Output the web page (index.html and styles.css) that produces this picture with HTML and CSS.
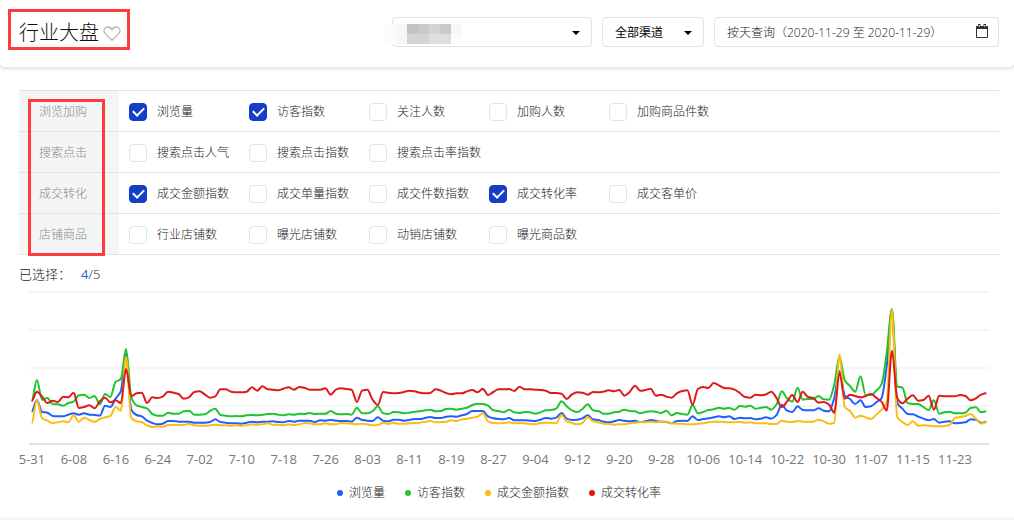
FILE: index.html
```html
<!DOCTYPE html>
<html lang="zh-CN">
<head>
  <meta charset="UTF-8" />
  <meta name="viewport" content="width=device-width, initial-scale=1.0"/>
  <title>行业大盘</title>
  <link rel="stylesheet" href="styles.css">
</head>
<body>
  <header class="topbar">
    <div class="title marked">
      <h1>行业大盘</h1>
      <button class="fav" aria-label="收藏">
        <svg width="18" height="16" viewBox="0 0 18 16"><path d="M9 14.4 2.2 7.6A3.9 3.9 0 0 1 1 4.900C1 2.700 2.700 1 4.900 1 6.800 1 8.300 2.300 9 3.900 9.700 2.300 11.200 1 13.100 1 15.300 1 17 2.700 17 4.900c0 1-.4 2-1.200 2.700z" fill="none" stroke="#b5b5b5" stroke-width="1.300" stroke-linejoin="round"/></svg>
      </button>
    </div>

    <div class="filters">
      <div class="select wide">
        <select aria-label="类目"><option></option></select>
        <div class="mosaic">
          <i class="m1"></i><i class="m2"></i><i class="m6"></i><i class="m5"></i><i class="m4"></i><i class="m5"></i><i class="m2"></i>
          <i class="m1"></i><i class="m2"></i><i class="m4"></i><i class="m4"></i><i class="m3"></i><i class="m3"></i><i class="m1"></i>
        </div>
      </div>
      <div class="select">
        <select aria-label="渠道"><option>全部渠道</option></select>
      </div>
      <button class="date">
        <span>按天查询（2020-11-29 至 2020-11-29）</span>
        <svg width="14" height="14" viewBox="0 0 14 14"><path d="M1.500 2.500h11v11h-11z" fill="none" stroke="#333"/><path d="M1 2h12v3H1z" fill="#333"/><path d="M3 0h2.500v3.500H3zM8.500 0H11v3.500H8.500z" fill="#333"/><path d="M3.800 1h1v1.800h-1zM9.300 1h1v1.800h-1z" fill="#fff"/></svg>
      </button>
    </div>
  </header>

  <main class="panel">
    <div class="metrics">
      <fieldset class="row">
        <legend>浏览加购</legend>
        <label><input type="checkbox" checked>浏览量</label>
        <label><input type="checkbox" checked>访客指数</label>
        <label><input type="checkbox">关注人数</label>
        <label><input type="checkbox">加购人数</label>
        <label><input type="checkbox">加购商品件数</label>
      </fieldset>
      <fieldset class="row">
        <legend>搜索点击</legend>
        <label><input type="checkbox">搜索点击人气</label>
        <label><input type="checkbox">搜索点击指数</label>
        <label><input type="checkbox">搜索点击率指数</label>
      </fieldset>
      <fieldset class="row">
        <legend>成交转化</legend>
        <label><input type="checkbox" checked>成交金额指数</label>
        <label><input type="checkbox">成交单量指数</label>
        <label><input type="checkbox">成交件数指数</label>
        <label><input type="checkbox" checked>成交转化率</label>
        <label><input type="checkbox">成交客单价</label>
      </fieldset>
      <fieldset class="row">
        <legend>店铺商品</legend>
        <label><input type="checkbox">行业店铺数</label>
        <label><input type="checkbox">曝光店铺数</label>
        <label><input type="checkbox">动销店铺数</label>
        <label><input type="checkbox">曝光商品数</label>
      </fieldset>
      <div class="side-mark marked"></div>
    </div>

    <p class="picked">已选择：<span class="count"><b>4</b>/5</span></p>

    <div class="chart">
      <svg id="plot" class="plot" viewBox="0 0 1830 456" preserveAspectRatio="none"></svg>
      <div id="axis" class="axis"></div>
      <div class="legend">
        <span class="blue">浏览量</span>
        <span class="green">访客指数</span>
        <span class="yellow">成交金额指数</span>
        <span class="red">成交转化率</span>
      </div>
    </div>
  </main>

  <script src="chart.js"></script>
</body>
</html>
```
FILE: styles.css
```css
* {
  box-sizing: border-box;
}
body {
  margin: 0;
  background: #f5f5f5;
  color: #222;
  font-family: "Open Sans", "Noto Sans CJK SC", sans-serif;
  font-size: 12px;
  font-weight: 300;
  line-height: 18px;
}
button, select {
  font: inherit;
  color: inherit;
}

/* top bar */
.topbar {
  position: relative;
  display: flex;
  justify-content: space-between;
  align-items: flex-start;
  height: 67px;
  padding: 9px 15px 0 8px;
  background: #fff;
  border-radius: 0 0 4px 4px;
  box-shadow: 0 1px 5px rgba(0, 0, 0, 0.18);
}
.marked {
  border: 3px solid #ff3b3b;
}
.title {
  display: flex;
  align-items: center;
  gap: 4px;
  height: 41px;
  padding: 6px 6px 0 8px;
}
h1 {
  margin: 0;
  color: #111;
  font-size: 20px;
  font-weight: 300;
  line-height: 28px;
}
.fav {
  display: flex;
  padding: 2px 0 0;
  border: none;
  background: none;
  cursor: pointer;
}
.filters {
  display: flex;
  gap: 10px;
  padding-top: 8px;
}
.select {
  position: relative;
  width: 102px;
}
.select.wide {
  width: 200px;
}
.select select, .date {
  width: 100%;
  height: 30px;
  padding: 2px 12px 0;
  border: 1px solid #e0e2e3;
  border-radius: 4px;
  background: #fff;
  cursor: pointer;
}
.select select {
  appearance: none;
  color: #000;
  font-weight: 400;
}
.select::after {
  content: "";
  position: absolute;
  top: 14px;
  right: 12px;
  border: 4px solid transparent;
  border-top-color: #000;
  border-bottom: none;
  pointer-events: none;
}
.date {
  display: flex;
  justify-content: space-between;
  align-items: center;
  width: 285px;
  padding-right: 9px;
}
.date svg {
  margin-bottom: 4px;
}
.mosaic {
  position: absolute;
  top: 7px;
  left: -7px;
  display: grid;
  grid-template-columns: repeat(7, 11px);
  grid-auto-rows: 10px;
  pointer-events: none;
}
.m1 { background: #fcfcfc; }
.m2 { background: #f7f7f7; }
.m3 { background: #dedede; }
.m4 { background: #d4d4d4; }
.m5 { background: #cacaca; }
.m6 { background: #c2c2c2; }

/* metric picker */
.panel {
  padding: 23px 15px 15px 19px;
  background: #fff;
}
.metrics {
  position: relative;
  border-top: 1px solid #e1e4e5;
}
.row {
  display: flex;
  align-items: center;
  height: 41px;
  margin: 0;
  padding: 0 0 0 10px;
  border: none;
  border-bottom: 1px solid #e1e4e5;
}
.row legend {
  float: left;
  width: 100px;
  height: 40px;
  margin-left: -10px;
  margin-right: 10px;
  padding: 0 0 0 20px;
  background: #f4f6f6;
  color: #888;
  line-height: 42px;
}
.row label {
  display: flex;
  align-items: center;
  gap: 10px;
  width: 120px;
  padding-top: 2px;
  line-height: 20px;
  white-space: nowrap;
  cursor: pointer;
}
.row input {
  flex: none;
  appearance: none;
  width: 18px;
  height: 18px;
  margin: 0;
  border: 1px solid #e1e4e5;
  border-radius: 4px;
  background: #fff;
}
.row input:checked {
  display: grid;
  place-items: center;
  border-color: #153fc7;
  background: #153fc7;
}
.row input:checked::before {
  content: "";
  width: 9px;
  height: 5px;
  margin-bottom: 3px;
  border: solid #fff;
  border-width: 0 0 2px 2px;
  transform: rotate(-45deg);
}
.side-mark {
  position: absolute;
  top: 8px;
  left: 9px;
  width: 77px;
  height: 157px;
  pointer-events: none;
}
.picked {
  margin: 10px 0 9px;
  font-size: 13px;
}
.count {
  margin-left: 10px;
}
.count b {
  color: #1c5fe0;
  font-weight: 400;
}

/* trend chart */
.chart {
  padding: 0 10px;
}
.plot {
  display: block;
  width: 100%;
  height: 152px;
  overflow: visible;
}
.plot path {
  fill: none;
  stroke-width: 2;
  stroke-linejoin: round;
  vector-effect: non-scaling-stroke;
}
.plot line {
  stroke: #ebebeb;
  shape-rendering: crispEdges;
  vector-effect: non-scaling-stroke;
}
.plot .base {
  stroke: #b9cbdc;
}
.axis {
  display: flex;
  margin: 6px 13px 0 -18px;
  color: #777;
  font-size: 13px;
  font-weight: 400;
}
.axis span {
  display: flex;
  justify-content: center;
  flex: 1 1 0;
  min-width: 0;
  white-space: nowrap;
}
.legend {
  display: flex;
  justify-content: center;
  gap: 20px;
  margin-top: 16px;
  padding-right: 20px;
}
.legend span {
  display: flex;
  align-items: center;
  gap: 6px;
}
.legend span::before {
  content: "";
  width: 6px;
  height: 6px;
  border-radius: 50%;
}
.legend .blue::before { background: #1f5eff; }
.legend .green::before { background: #1fc42e; }
.legend .yellow::before { background: #fcbc14; }
.legend .red::before { background: #df1919; }
```
FILE: chart.js
```js
// one value per day, 5-31 to 11-29, on a 0-456 scale
const series = [
  { color: '#1f5eff', data: [
    97,132,96,94,84,83,83,88,92,88,92,88,87,85,115,111,136,158,271,103,87,83,70,63,59,
    61,69,69,67,67,67,64,64,64,66,74,66,64,62,62,61,64,67,65,67,
    67,68,66,65,69,67,70,70,70,66,71,70,72,70,69,69,67,79,72,70,69,80,70,68,73,
    73,70,72,75,75,78,81,78,78,82,83,82,86,90,99,99,99,83,77,75,74,78,
    71,71,71,70,69,73,78,76,79,93,76,72,73,77,86,74,72,67,65,68,72,70,68,70,66,68,72,69,67,
    66,62,69,70,69,83,72,75,77,80,83,80,83,75,79,77,78,74,
    76,80,76,87,118,100,96,113,102,101,101,107,100,98,138,219,145,135,120,131,111,113,125,137,233,
    403,123,106,90,89,82,76,71,75,64,67,68,62,63,65,74,73,63,67
  ] },
  { color: '#1fc42e', data: [
    129,192,133,138,120,119,115,123,127,146,148,138,144,119,150,141,186,195,285,141,116,111,107,90,85,
    85,94,91,91,98,100,88,88,89,99,106,87,85,83,84,83,86,87,86,88,
    90,91,88,86,89,88,91,90,93,90,91,91,99,91,89,90,88,109,92,92,99,113,92,90,96,
    95,92,94,97,98,101,103,98,99,105,106,103,106,109,117,121,120,115,101,99,95,103,
    95,93,96,95,91,95,101,102,106,128,113,101,96,105,119,101,99,91,91,95,97,103,99,98,92,96,98,97,93,
    100,86,93,90,88,117,92,96,102,104,109,106,108,103,114,112,115,106,
    109,111,103,119,158,137,127,169,133,135,135,144,134,133,178,263,191,174,157,203,147,147,160,179,273,
    405,173,169,122,120,120,111,102,131,91,95,97,92,92,94,108,110,95,98
  ] },
  { color: '#fcbc14', data: [
    61,132,77,70,63,65,68,65,86,67,79,72,66,75,80,84,111,100,261,78,68,65,56,51,53,
    52,57,57,57,57,61,56,55,55,56,58,56,56,55,56,55,56,59,58,59,
    62,58,58,56,59,57,59,63,62,59,59,62,59,59,63,62,61,59,61,59,56,57,64,60,64,
    61,61,62,63,64,67,69,65,66,67,71,69,74,76,79,82,92,68,63,62,63,65,
    62,63,62,60,59,63,64,64,62,87,68,63,59,63,81,68,65,61,60,58,59,59,62,64,66,65,67,65,67,
    67,62,61,61,59,59,61,62,65,67,67,66,65,65,67,64,65,62,
    62,62,60,60,70,67,66,69,67,67,67,73,68,61,63,268,111,99,79,85,80,75,88,103,123,
    403,81,66,57,68,55,56,55,53,53,54,57,78,81,84,90,76,61,65
  ] },
  { color: '#df1919', data: [
    129,157,142,123,130,126,142,140,154,108,111,116,107,128,139,125,131,123,225,143,152,154,123,140,138,
    142,157,154,150,136,140,156,158,149,139,143,164,164,157,155,155,157,170,160,173,
    164,163,161,166,170,163,171,169,163,163,163,167,148,163,167,165,163,126,160,163,133,117,156,154,152,
    153,156,160,158,154,152,153,164,160,153,149,152,152,158,162,155,166,147,156,164,164,165,
    159,172,164,164,163,162,160,153,153,151,135,149,155,154,148,156,155,157,161,158,162,145,156,175,160,162,166,145,148,
    142,139,152,159,161,118,165,171,168,183,176,168,167,163,153,141,139,148,
    146,149,157,138,111,127,147,126,157,141,138,124,126,118,94,213,136,148,144,140,144,150,139,127,100,
    280,138,122,136,146,130,132,145,103,145,143,143,143,147,144,131,137,148,152
  ] }
];

const days = ['5-31', '6-08', '6-16', '6-24', '7-02', '7-10', '7-18', '7-26',
  '8-03', '8-11', '8-19', '8-27', '9-04', '9-12', '9-20', '9-28',
  '10-06', '10-14', '10-22', '10-30', '11-07', '11-15', '11-23'];

const HEIGHT = 456;
const STEP = 10;

// tangent of the curve at a point, flat at peaks and dips
function slope(data, i) {
  if (i === 0 || i === data.length - 1) return 0;
  const a = data[i] - data[i - 1];
  const b = data[i + 1] - data[i];
  if (a * b <= 0) return 0;
  return 2 * a * b / (a + b);
}

function linePath(data) {
  let d = '';
  data.forEach((v, i) => {
    const x = i * STEP + STEP / 2;
    const y = HEIGHT - v;
    if (i === 0) {
      d = `M${x} ${y}`;
      return;
    }
    const y1 = HEIGHT - data[i - 1] - slope(data, i - 1) / 3;
    const y2 = y + slope(data, i) / 3;
    d += `C${x - STEP * 2 / 3} ${y1} ${x - STEP / 3} ${y2} ${x} ${y}`;
  });
  return d;
}

let svg = '';
for (let i = 0; i <= 4; i++) {
  const y = i * HEIGHT / 4;
  svg += `<line class="${i === 4 ? 'base' : 'grid'}" x1="0" x2="1830" y1="${y}" y2="${y}"/>`;
}
series.forEach(s => {
  svg += `<path stroke="${s.color}" d="${linePath(s.data)}"/>`;
});
document.getElementById('plot').innerHTML = svg;
document.getElementById('axis').innerHTML = days.map(day => `<span>${day}</span>`).join('');
```
